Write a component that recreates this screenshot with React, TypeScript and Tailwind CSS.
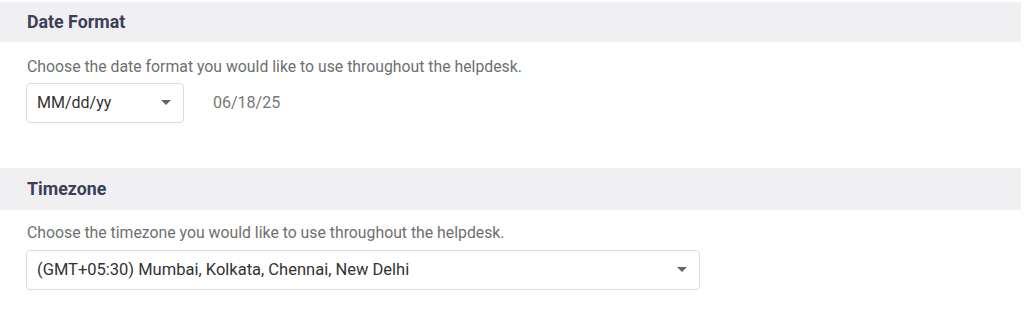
import React from "react";

function Caret() {
  return (
    <svg width="10" height="6" viewBox="0 0 10 6" className="shrink-0">
      <path d="M0 0 L10 0 L5 5 Z" fill="#666666" />
    </svg>
  );
}

export default function App() {
  return (
    <div className="w-[1024px] h-[312px] bg-white pt-[2px] pr-[3px] font-['Roboto',sans-serif]">
      <div className="h-[40px] bg-[#f0f0f3] flex items-center pl-[27px]">
        <span className="text-[17.8px] font-bold text-[#3b3f57]">Date Format</span>
      </div>
      <div className="pl-[26px] pt-[14px]">
        <p className="pl-[1px] text-[15.8px] leading-[22px] text-[#6f6f6f]">
          Choose the date format you would like to use throughout the helpdesk.
        </p>
        <div className="mt-[5px] flex items-center">
          <div className="w-[158px] h-[40px] border border-[#dcdcdc] rounded-[4px] flex items-center justify-between pl-[10px] pr-[12px]">
            <span className="text-[16px] text-[#333333]">MM/dd/yy</span>
            <Caret />
          </div>
          <span className="ml-[29px] text-[16px] text-[#777777]">06/18/25</span>
        </div>
      </div>
      <div className="mt-[45px] h-[42px] bg-[#f0f0f3] flex items-center pl-[27px]">
        <span className="text-[17.8px] font-bold text-[#3b3f57]">Timezone</span>
      </div>
      <div className="pl-[26px] pt-[12px]">
        <p className="pl-[1px] text-[15.8px] leading-[22px] text-[#6f6f6f]">
          Choose the timezone you would like to use throughout the helpdesk.
        </p>
        <div className="mt-[6px] w-[674px] h-[40px] border border-[#dcdcdc] rounded-[4px] flex items-center justify-between pl-[10px] pr-[12px]">
          <span className="text-[16.5px] text-[#333333]">(GMT+05:30) Mumbai, Kolkata, Chennai, New Delhi</span>
          <Caret />
        </div>
      </div>
    </div>
  );
}
